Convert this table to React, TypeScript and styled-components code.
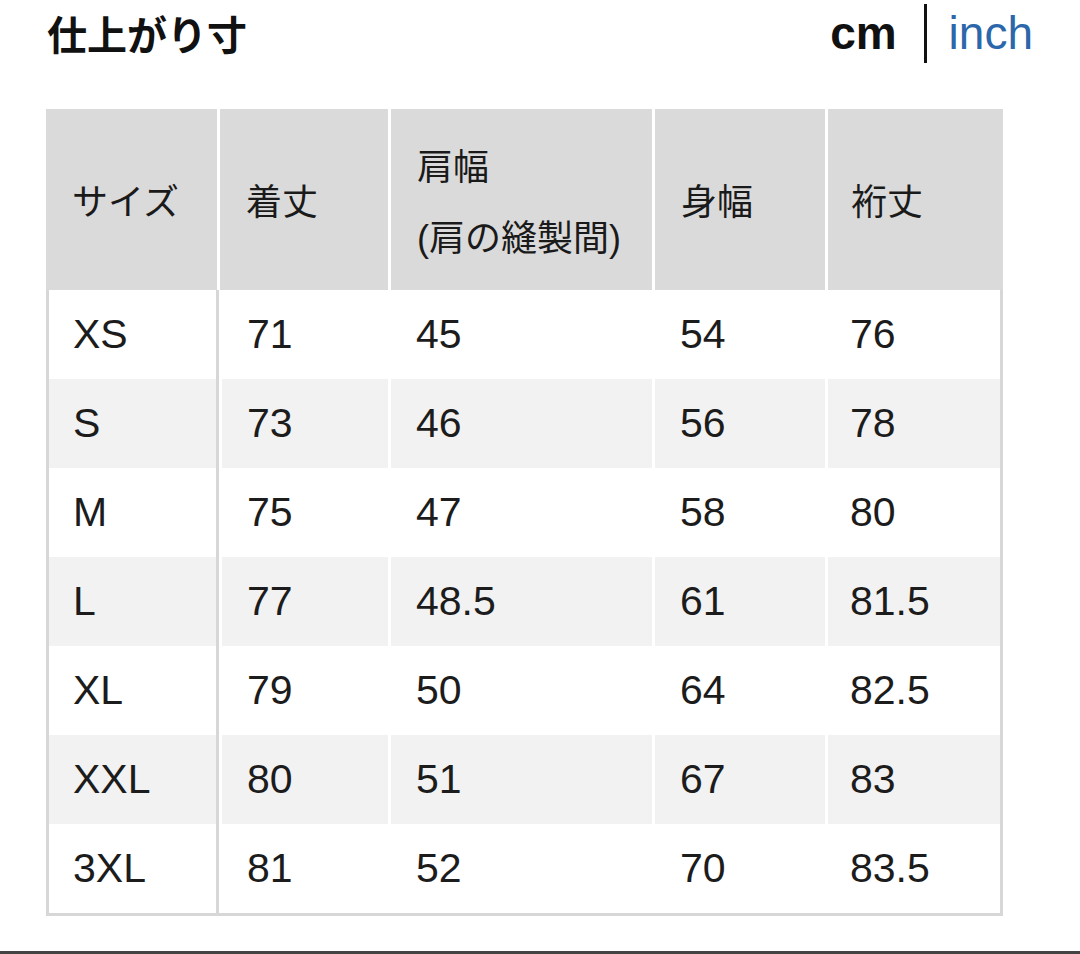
import React from "react";
import styled, { createGlobalStyle } from "styled-components";

const GlobalStyle = createGlobalStyle`
  html, body {
    margin: 0;
    padding: 0;
    background: #ffffff;
  }
  body {
    font-family: "Liberation Sans", "Noto Sans CJK JP", sans-serif;
    color: #111111;
  }
`;

const Page = styled.div`
  width: 1080px;
  height: 954px;
  display: flex;
  flex-direction: column;
  overflow: hidden;
`;

const TitleBar = styled.div`
  height: 66px;
  display: flex;
  align-items: center;
  justify-content: space-between;
  padding: 0 47px 0 47px;
`;

const Title = styled.h1`
  margin: 0;
  font-family: "Noto Sans CJK JP", sans-serif;
  font-size: 40px;
  font-weight: 700;
  line-height: 1;
`;

const UnitSwitch = styled.div`
  display: flex;
  align-items: center;
`;

const Unit = styled.span<{ $active?: boolean }>`
  font-family: "Liberation Sans", sans-serif;
  font-size: 46px;
  line-height: 1;
  font-weight: ${(p) => (p.$active ? 700 : 400)};
  color: ${(p) => (p.$active ? "#111111" : "#2b67aa")};
  cursor: pointer;
`;

const UnitDivider = styled.span`
  width: 3px;
  height: 59px;
  margin: 0 22px 0 27px;
  background: #111111;
`;

const Table = styled.div`
  margin: 43px 0 0 46px;
  width: 957px;
`;

const HeaderRow = styled.div`
  display: grid;
  grid-template-columns: 171px 168px 261px 170px 1fr;
  column-gap: 3px;
  height: 181px;
`;

const HeaderCell = styled.div<{ $last?: boolean }>`
  background: #dadada;
  display: flex;
  flex-direction: column;
  justify-content: center;
  padding: 6px 0 0 ${(p) => (p.$last ? 23 : 26)}px;
  font-family: "Liberation Sans", "Noto Sans CJK JP", sans-serif;
  font-size: 36px;
  line-height: 71px;
  color: #1a1a1a;
`;

const Body = styled.div`
  border: 3px solid #d7d7d7;
  border-top: none;
`;

const Row = styled.div<{ $striped?: boolean }>`
  display: grid;
  grid-template-columns: 170px 166px 261px 170px 1fr;
  column-gap: 3px;
  height: 89px;
  & > div {
    background: ${(p) => (p.$striped ? "#f2f2f2" : "#ffffff")};
  }
`;

const Cell = styled.div<{ $first?: boolean; $last?: boolean }>`
  display: flex;
  align-items: center;
  padding-left: ${(p) => (p.$first ? 24 : p.$last ? 22 : 25)}px;
  font-family: "Liberation Sans", sans-serif;
  font-size: 41px;
  color: #1c1c1c;
  border-right: ${(p) => (p.$first ? "3px solid #d7d7d7" : "none")};
`;

const BottomRule = styled.div`
  margin-top: auto;
  height: 3px;
  background: #444444;
`;

const headers: string[][] = [
  ["サイズ"],
  ["着丈"],
  ["肩幅", "(肩の縫製間)"],
  ["身幅"],
  ["裄丈"],
];

const rows: string[][] = [
  ["XS", "71", "45", "54", "76"],
  ["S", "73", "46", "56", "78"],
  ["M", "75", "47", "58", "80"],
  ["L", "77", "48.5", "61", "81.5"],
  ["XL", "79", "50", "64", "82.5"],
  ["XXL", "80", "51", "67", "83"],
  ["3XL", "81", "52", "70", "83.5"],
];

export default function App() {
  return (
    <Page>
      <GlobalStyle />
      <TitleBar>
        <Title>仕上がり寸</Title>
        <UnitSwitch>
          <Unit $active>cm</Unit>
          <UnitDivider />
          <Unit>inch</Unit>
        </UnitSwitch>
      </TitleBar>
      <Table>
        <HeaderRow>
          {headers.map((lines, i) => (
            <HeaderCell key={i} $last={i === headers.length - 1}>
              {lines.map((l) => (
                <span key={l}>{l}</span>
              ))}
            </HeaderCell>
          ))}
        </HeaderRow>
        <Body>
          {rows.map((r, i) => (
            <Row key={r[0]} $striped={i % 2 === 1}>
              {r.map((v, j) => (
                <Cell key={j} $first={j === 0} $last={j === r.length - 1}>
                  {v}
                </Cell>
              ))}
            </Row>
          ))}
        </Body>
      </Table>
      <BottomRule />
    </Page>
  );
}
